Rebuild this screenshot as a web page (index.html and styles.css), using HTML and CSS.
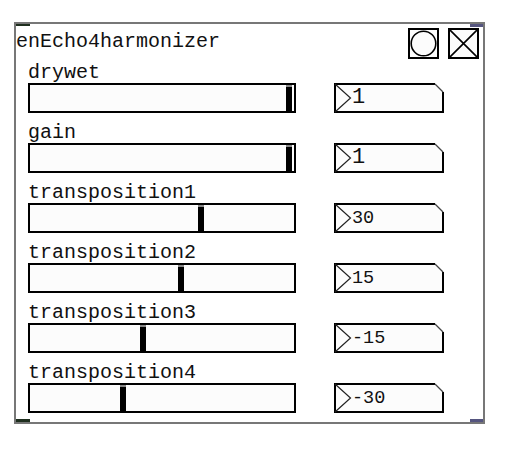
FILE: index.html
```html
<!DOCTYPE html>
<html>
<head>
<meta charset="utf-8">
<link rel="stylesheet" href="styles.css">
</head>
<body>
<div class="patch">
  <span class="port inlet"></span>
  <span class="port outlet-tr"></span>
  <span class="port outlet-bl"></span>
  <span class="port outlet-br"></span>
  <header class="head">
    <div class="title">enEcho4harmonizer</div>
    <div class="btns">
      <div class="btn"><svg viewBox="0 0 27 27"><circle cx="13.5" cy="13.5" r="12.3" fill="none" stroke="#000" stroke-width="1.6"/></svg></div>
      <div class="btn"><svg viewBox="0 0 27 27"><path d="M0 0L27 27M27 0L0 27" stroke="#000" stroke-width="1.6"/></svg></div>
    </div>
  </header>
  <div class="rows">
    <div class="row">
      <div class="label">drywet</div>
      <div class="ctrls">
        <div class="slider"><div class="knob" style="margin-left:256px"></div></div>
        <div class="nbox"><svg viewBox="0 0 110 30"><path d="M101 1H1V29H109V9" fill="#fcfcfc" stroke="#000" stroke-width="2"/><path d="M101 1L109 9" stroke="#444" stroke-width="1.2"/><path d="M1 1L16.5 15L1 29" fill="none" stroke="#222" stroke-width="1.2"/></svg><span class="num big">1</span></div>
      </div>
    </div>
    <div class="row">
      <div class="label">gain</div>
      <div class="ctrls">
        <div class="slider"><div class="knob" style="margin-left:256px"></div></div>
        <div class="nbox"><svg viewBox="0 0 110 30"><path d="M101 1H1V29H109V9" fill="#fcfcfc" stroke="#000" stroke-width="2"/><path d="M101 1L109 9" stroke="#444" stroke-width="1.2"/><path d="M1 1L16.5 15L1 29" fill="none" stroke="#222" stroke-width="1.2"/></svg><span class="num big">1</span></div>
      </div>
    </div>
    <div class="row">
      <div class="label">transposition1</div>
      <div class="ctrls">
        <div class="slider"><div class="knob" style="margin-left:168px"></div></div>
        <div class="nbox"><svg viewBox="0 0 110 30"><path d="M101 1H1V29H109V9" fill="#fcfcfc" stroke="#000" stroke-width="2"/><path d="M101 1L109 9" stroke="#444" stroke-width="1.2"/><path d="M1 1L16.5 15L1 29" fill="none" stroke="#222" stroke-width="1.2"/></svg><span class="num">30</span></div>
      </div>
    </div>
    <div class="row">
      <div class="label">transposition2</div>
      <div class="ctrls">
        <div class="slider"><div class="knob" style="margin-left:148px"></div></div>
        <div class="nbox"><svg viewBox="0 0 110 30"><path d="M101 1H1V29H109V9" fill="#fcfcfc" stroke="#000" stroke-width="2"/><path d="M101 1L109 9" stroke="#444" stroke-width="1.2"/><path d="M1 1L16.5 15L1 29" fill="none" stroke="#222" stroke-width="1.2"/></svg><span class="num">15</span></div>
      </div>
    </div>
    <div class="row">
      <div class="label">transposition3</div>
      <div class="ctrls">
        <div class="slider"><div class="knob" style="margin-left:110px"></div></div>
        <div class="nbox"><svg viewBox="0 0 110 30"><path d="M101 1H1V29H109V9" fill="#fcfcfc" stroke="#000" stroke-width="2"/><path d="M101 1L109 9" stroke="#444" stroke-width="1.2"/><path d="M1 1L16.5 15L1 29" fill="none" stroke="#222" stroke-width="1.2"/></svg><span class="num">-15</span></div>
      </div>
    </div>
    <div class="row">
      <div class="label">transposition4</div>
      <div class="ctrls">
        <div class="slider"><div class="knob" style="margin-left:90px"></div></div>
        <div class="nbox"><svg viewBox="0 0 110 30"><path d="M101 1H1V29H109V9" fill="#fcfcfc" stroke="#000" stroke-width="2"/><path d="M101 1L109 9" stroke="#444" stroke-width="1.2"/><path d="M1 1L16.5 15L1 29" fill="none" stroke="#222" stroke-width="1.2"/></svg><span class="num">-30</span></div>
      </div>
    </div>
  </div>
</div>
</body>
</html>
```
FILE: styles.css
```css
body {
  margin: 0;
  background: #fff;
}

.patch {
  position: relative;
  box-sizing: border-box;
  width: 471px;
  height: 402px;
  margin: 22px 0 0 14px;
  border: 2px solid #777;
  background: #fff;
  font-family: "Liberation Mono", "DejaVu Sans Mono", monospace;
  color: #111;
}

.port {
  position: absolute;
  display: block;
}

.inlet {
  left: 0;
  top: 0;
  width: 14px;
  height: 2px;
  background: #1e2e1e;
}

.outlet-bl {
  left: 0;
  bottom: 0;
  width: 14px;
  height: 3px;
  background: #1e2e1e;
}

.outlet-tr {
  right: 0;
  top: 0;
  width: 13px;
  height: 3px;
  background: #55557f;
}

.outlet-br {
  right: 0;
  bottom: 0;
  width: 13px;
  height: 3px;
  background: #55557f;
}

.head {
  display: flex;
  justify-content: space-between;
  height: 29px;
  padding-right: 4px;
}

.title {
  font-size: 20px;
  line-height: 20px;
  margin-top: 8px;
}

.btns {
  display: flex;
  gap: 9px;
  margin-top: 4px;
  height: 31px;
}

.btn {
  box-sizing: border-box;
  width: 31px;
  height: 31px;
  border: 2px solid #000;
  background: #fcfcfc;
}

.btn svg {
  display: block;
  width: 27px;
  height: 27px;
}

.rows {
  padding-left: 12px;
}

.row {
  height: 60px;
}

.label {
  box-sizing: border-box;
  height: 30px;
  padding-top: 10px;
  font-size: 20px;
  line-height: 20px;
}

.ctrls {
  display: flex;
  gap: 38px;
  height: 30px;
}

.slider {
  box-sizing: border-box;
  display: flex;
  width: 268px;
  height: 30px;
  border: 2px solid #000;
  background: #fcfcfc;
}

.knob {
  box-sizing: border-box;
  width: 6px;
  height: 26px;
  background: #000;
  border-top: 2px solid #888;
}

.nbox {
  position: relative;
  display: flex;
  align-items: center;
  width: 110px;
  height: 30px;
}

.nbox svg {
  position: absolute;
  left: 0;
  top: 0;
  width: 110px;
  height: 30px;
}

.num {
  position: relative;
  padding-left: 18px;
  font-size: 18.5px;
  line-height: 20px;
  padding-top: 2px;
}

.num.big {
  font-size: 22px;
  padding-top: 0;
}
```
